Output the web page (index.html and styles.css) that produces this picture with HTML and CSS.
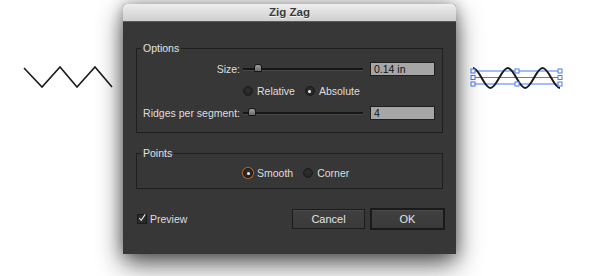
FILE: index.html
```html
<!DOCTYPE html>
<html lang="en">
<head>
    <meta charset="UTF-8">
    <meta name="viewport" content="width=device-width, initial-scale=1.0">
    <title>Zig Zag</title>
    <link rel="stylesheet" href="styles.css">
</head>
<body>
    <div class="stage">
        <!-- original path, left of the dialog -->
        <svg class="art art-left" width="123" height="276" viewBox="0 0 123 276">
            <polyline points="24,68 42,87 60,67 77,87 95,67 112,87" fill="none" stroke="#1b1b1b" stroke-width="1.6"/>
        </svg>

        <div class="dialog">
            <div class="titlebar">Zig Zag</div>
            <div class="dialog-body">
                <fieldset class="group options">
                    <legend>Options</legend>
                    <div class="row">
                        <label class="row-label">Size:</label>
                        <div class="slider"><span class="thumb" style="margin-left: 11px"></span></div>
                        <input class="num" type="text" value="0.14 in">
                    </div>
                    <div class="row">
                        <span class="row-label"></span>
                        <div class="radios">
                            <label class="radio"><span class="dot"></span>Relative</label>
                            <label class="radio"><span class="dot checked"></span>Absolute</label>
                        </div>
                    </div>
                    <div class="row">
                        <label class="row-label">Ridges per segment:</label>
                        <div class="slider"><span class="thumb" style="margin-left: 5px"></span></div>
                        <input class="num" type="text" value="4">
                    </div>
                </fieldset>

                <fieldset class="group points">
                    <legend>Points</legend>
                    <div class="radios">
                        <label class="radio"><span class="dot checked focus"></span>Smooth</label>
                        <label class="radio"><span class="dot"></span>Corner</label>
                    </div>
                </fieldset>

                <div class="footer">
                    <label class="check">
                        <span class="box">
                            <svg width="10" height="10" viewBox="0 0 10 10"><polyline points="1.5,5 4,8 9,0.5" fill="none" stroke="#e8e8e8" stroke-width="1.4"/></svg>
                        </span>
                        Preview
                    </label>
                    <button class="btn cancel">Cancel</button>
                    <button class="btn ok">OK</button>
                </div>
            </div>
        </div>

        <!-- result preview, right of the dialog -->
        <svg class="art art-right" width="144" height="276" viewBox="456 0 144 276">
            <g stroke="#4b7cf3" stroke-width="1" fill="none">
                <line x1="473" y1="71" x2="560" y2="71"/>
                <line x1="473" y1="77.5" x2="560" y2="77.5"/>
                <line x1="473" y1="84" x2="560" y2="84"/>
            </g>
            <path d="M473 68 C479.3 68 484.1 88 490.4 88 C496.7 88 501.5 68 507.8 68 C514.1 68 518.9 88 525.2 88 C531.5 88 536.3 68 542.6 68 C548.9 68 553.7 88 560 88" fill="none" stroke="#1b1b1b" stroke-width="2"/>
            <g fill="#fff" stroke="#4b7cf3" stroke-width="1">
                <rect x="471" y="69" width="4" height="4"/>
                <rect x="471" y="75.5" width="4" height="4"/>
                <rect x="471" y="82" width="4" height="4"/>
                <rect x="515" y="69" width="4" height="4"/>
                <rect x="515" y="82" width="4" height="4"/>
                <rect x="558" y="69" width="4" height="4"/>
                <rect x="558" y="75.5" width="4" height="4"/>
                <rect x="558" y="82" width="4" height="4"/>
            </g>
        </svg>
    </div>
</body>
</html>
```

FILE: styles.css
```css
body {
    margin: 0;
    background-color: #fff;
    font-family: "Liberation Sans", Arial, sans-serif;
    overflow: hidden;
}

.stage {
    display: flex;
    align-items: flex-start;
    width: 600px;
    height: 276px;
}

.art {
    display: block;
    flex: none;
}

.dialog {
    position: relative;
    z-index: 1;
    width: 333px;
    height: 250px;
    margin-top: 4px;
    background-color: #373737;
    border-radius: 4px 4px 0 0;
    box-shadow: 0 10px 26px rgba(0, 0, 0, 0.65), 0 0 14px rgba(0, 0, 0, 0.3);
    flex: none;
}

.titlebar {
    height: 17px;
    line-height: 17px;
    text-align: center;
    font-size: 11.5px;
    font-weight: bold;
    color: #3a3a3a;
    text-shadow: 0 1px 0 #f4f4f4;
    background: linear-gradient(#eeeeee, #cfcfcf);
    border-radius: 4px 4px 0 0;
    border-bottom: 1px solid #5a5a5a;
}

.dialog-body {
    padding: 19px 13px 0 13px;
    font-size: 10.5px;
    color: #dedede;
}

.group {
    margin: 0;
    border: 1px solid #1f1f1f;
    min-width: 0;
}

.group legend {
    line-height: 14px;
    padding: 0 2px;
    margin-left: -2px;
    color: #e2e2e2;
}

.options {
    padding: 7px 6px 12px 6px;
}

.points {
    margin-top: 13px;
    padding: 6px 6px 8px 6px;
}

.points .radios {
    margin-left: 100px;
}

.row {
    display: flex;
    align-items: center;
    height: 14px;
    margin-bottom: 8px;
}

.row:last-child {
    margin-bottom: 0;
}

.row-label {
    width: 97px;
    text-align: right;
    flex: none;
}

.slider {
    display: flex;
    align-items: center;
    width: 120px;
    height: 14px;
    margin-left: 3px;
    background: linear-gradient(transparent 6px, #161616 6px, #161616 8px, #4a4a4a 8px, #4a4a4a 9px, transparent 9px);
    flex: none;
}

.thumb {
    width: 6px;
    height: 6px;
    margin-top: -2px;
    background: linear-gradient(#a0a0a0, #6a6a6a);
    border: 1px solid #161616;
    border-radius: 3px 3px 1px 1px;
}

.num {
    width: 65px;
    height: 14px;
    box-sizing: border-box;
    margin-left: 7px;
    padding: 0 3px;
    border: 1px solid #1f1f1f;
    background-color: #a6a6a6;
    color: #111;
    font-family: inherit;
    font-size: 10.5px;
    flex: none;
}

.radios {
    display: flex;
    align-items: center;
    height: 14px;
    margin-left: 3px;
    gap: 10px;
}

.radio {
    display: flex;
    align-items: center;
    gap: 4px;
}

.dot {
    width: 8px;
    height: 8px;
    border-radius: 50%;
    border: 1px solid #1a1a1a;
    background: radial-gradient(circle at 50% 40%, #2e2e2e, #222);
    display: flex;
    align-items: center;
    justify-content: center;
}

.dot.checked::after {
    content: "";
    width: 3px;
    height: 3px;
    border-radius: 50%;
    background-color: #f0f0f0;
}

.dot.focus {
    box-shadow: 0 0 0 1px #c26a24;
}

.footer {
    display: flex;
    align-items: center;
    margin-top: 19px;
    padding-left: 1px;
    height: 22px;
}

.check {
    display: flex;
    align-items: center;
    gap: 3px;
}

.box {
    width: 8px;
    height: 8px;
    border: 1px solid #1a1a1a;
    background-color: #2a2a2a;
    display: flex;
    align-items: flex-end;
    overflow: visible;
}

.box svg {
    display: block;
    margin: -3px 0 0 0;
}

.btn {
    height: 20px;
    padding: 0;
    font-family: inherit;
    font-size: 11px;
    color: #e4e4e4;
    background: linear-gradient(#404040, #3a3a3a);
    border: 1px solid #1c1c1c;
    box-shadow: inset 0 1px 0 #4a4a4a;
}

.cancel {
    width: 73px;
    margin-left: auto;
}

.ok {
    width: 75px;
    height: 22px;
    margin-left: 5px;
    margin-right: -2px;
    border: 2px solid #1a1a1a;
}
```
